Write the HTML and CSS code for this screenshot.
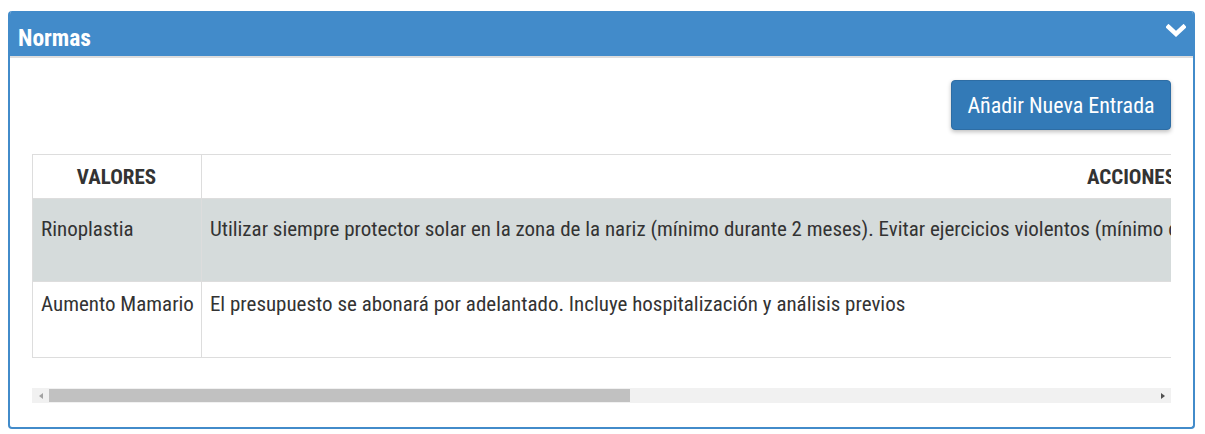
FILE: index.html
```html
<!DOCTYPE html>
<html lang="es">
<head>
<meta charset="utf-8">
<title>Normas</title>
<link rel="stylesheet" href="styles.css">
</head>
<body>
<div class="panel">
  <div class="panel-head">
    <h2 class="panel-title">Normas</h2>
    <svg class="chevron" width="20" height="14" viewBox="0 0 20 14"><path d="M2.5 3 L10 10 L17.5 3" fill="none" stroke="#fff" stroke-width="4.5" stroke-linecap="square" stroke-linejoin="miter"/></svg>
  </div>
  <div class="panel-body">
    <div class="toolbar">
      <button class="btn-add" type="button">Añadir Nueva Entrada</button>
    </div>
    <div class="table-wrap">
      <table class="grid">
        <thead>
          <tr><th class="c-val">VALORES</th><th class="c-act">ACCIONES</th></tr>
        </thead>
        <tbody>
          <tr class="alt"><td class="c-name">Rinoplastia</td><td>Utilizar siempre protector solar en la zona de la nariz (mínimo durante 2 meses). Evitar ejercicios violentos (mínimo durante 1 mes).</td></tr>
          <tr class="plain"><td class="c-name">Aumento Mamario</td><td>El presupuesto se abonará por adelantado. Incluye hospitalización y análisis previos</td></tr>
        </tbody>
      </table>
    </div>
    <div class="hscroll">
      <span class="arr arr-l"></span>
      <div class="track"><div class="thumb"></div></div>
      <span class="arr arr-r"></span>
    </div>
  </div>
</div>
</body>
</html>
```

FILE: styles.css
```css
html, body { margin: 0; padding: 0; background: #fff; }
body {
  padding: 11px 10px 0 8px;
  font-family: "Roboto Condensed", Roboto, "Liberation Sans", sans-serif;
  font-stretch: condensed;
  color: #333;
}
.panel {
  border: 2px solid #428bca;
  border-top: 0;
  border-radius: 4px;
  height: 418px;
  box-sizing: border-box;
  overflow: hidden;
}
.panel-head {
  background: #428bca;
  height: 45px;
  border-bottom: 2px solid #dddddd;
  display: flex;
  align-items: flex-start;
  justify-content: space-between;
  padding: 0 7px 0 8px;
}
.panel-title {
  margin: 13px 0 0 0;
  line-height: 28px;
  font-size: 23.5px;
  font-weight: 700;
  color: #fff;
}
.chevron { margin-top: 13px; }
.panel-body {
  padding: 22px 22px 0 22px;
}
.toolbar {
  display: flex;
  justify-content: flex-end;
}
.btn-add {
  width: 220px;
  height: 50px;
  background: #337ab7;
  border: 1px solid #2e6da4;
  border-radius: 4px;
  color: #fff;
  font-family: inherit;
  font-stretch: condensed;
  font-size: 22px;
  box-shadow: 0 2px 4px rgba(0,0,0,0.25);
  padding: 0;
}
.table-wrap {
  margin-top: 24px;
  overflow: hidden;
}
.grid {
  border-collapse: collapse;
  width: 2166px;
  font-size: 21px;
}
.grid th, .grid td {
  border: 1px solid #dddddd;
  text-align: left;
  vertical-align: top;
}
.grid th {
  height: 43px;
  font-size: 21px;
  font-weight: 700;
  color: #333;
  vertical-align: middle;
  padding: 0 8px;
}
.grid th.c-val { width: 151px; text-align: center; padding: 0 8px 0 7px; }
.grid th.c-act { padding-left: 885px; }
.grid td {
  padding: 18px 8px 0 8px;
  box-sizing: border-box;
  white-space: nowrap;
  line-height: 24px;
}
.grid td.c-name { padding-right: 7px; }
.grid tr.alt td { height: 83px; background: #d5dbdb; }
.grid tr.plain td { height: 76px; padding-top: 10px; }
.hscroll {
  margin-top: 30px;
  height: 15px;
  background: #f1f1f1;
  display: flex;
  align-items: center;
}
.arr { width: 17px; height: 15px; display: flex; align-items: center; justify-content: center; }
.arr-l::before {
  content: ""; border-style: solid; border-width: 3.5px 4px 3.5px 0;
  border-color: transparent #a3a3a3 transparent transparent;
}
.arr-r::before {
  content: ""; border-style: solid; border-width: 3.5px 0 3.5px 4px;
  border-color: transparent transparent transparent #505050;
}
.track { flex: 1; height: 15px; display: flex; align-items: center; }
.thumb { width: 581px; height: 13px; background: #c1c1c1; }
```
